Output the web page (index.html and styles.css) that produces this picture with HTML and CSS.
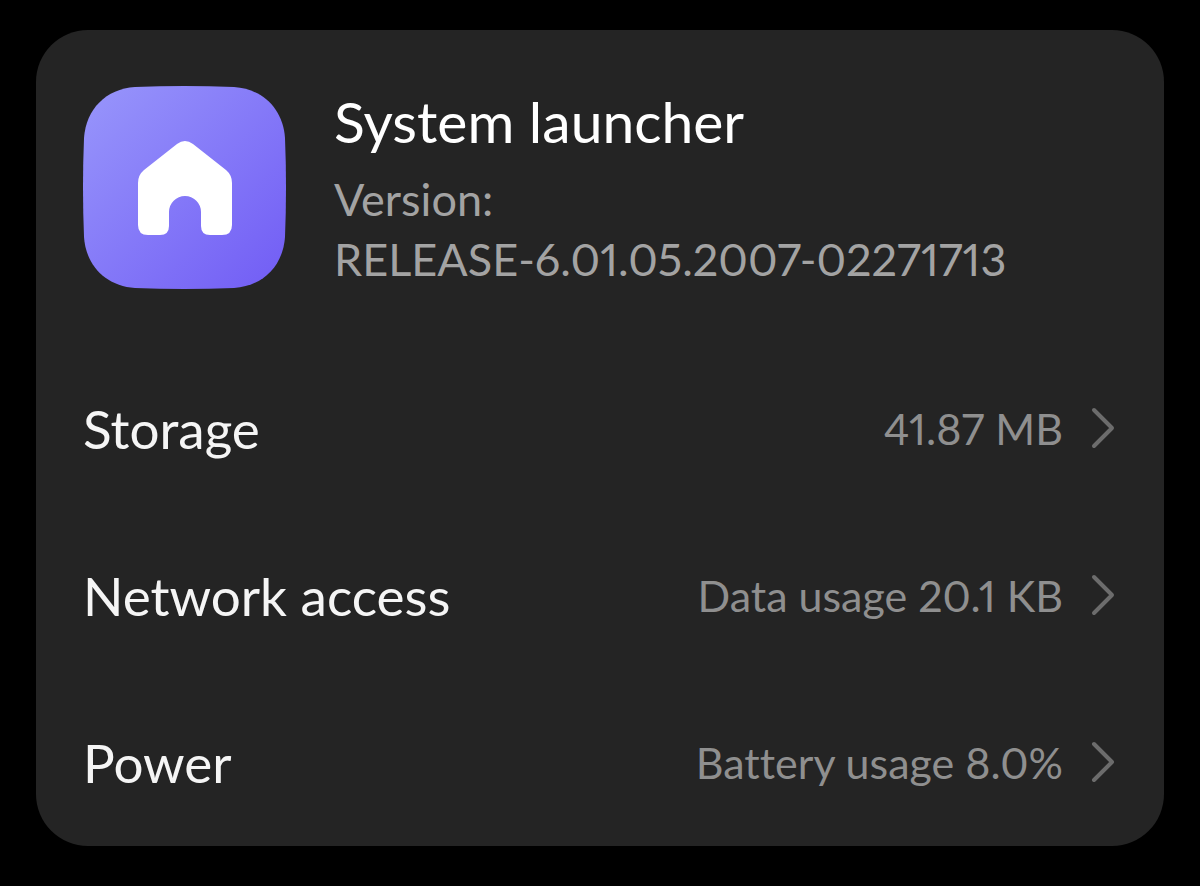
FILE: index.html
```html
<!DOCTYPE html>
<html lang="en">
<head>
<meta charset="utf-8">
<meta name="viewport" content="width=device-width, initial-scale=1">
<title>App info</title>
<link rel="stylesheet" href="styles.css">
</head>
<body>
<main class="card">
  <header class="app">
    <svg class="app-icon" viewBox="0 0 203 203" aria-hidden="true">
      <defs>
        <linearGradient id="tile" x1="0" y1="0" x2="1" y2="1">
          <stop offset="0.05" stop-color="#9693fb"/>
          <stop offset="0.95" stop-color="#735ff5"/>
        </linearGradient>
      </defs>
      <path fill="url(#tile)" d="M52 1Q101 -1 151 1C180 3 200 23 202 52Q204 101 202 151C200 180 180 200 151 202Q101 204 52 202C23 200 3 180 1 151Q-1 101 1 52C3 23 23 3 52 1Z"/>
      <path fill="#fff" d="M94 58Q102 52 110 58L143 84Q149 89 149 97V139Q149 149 139 149H127Q118 149 118 140V126A16 16 0 0 0 86 126V140Q86 149 77 149H65Q55 149 55 139V97Q55 89 61 84Z"/>
    </svg>
    <div class="app-text">
      <h1 class="app-name">System launcher</h1>
      <p class="app-version">Version:<br>RELEASE-6.01.05.2007-02271713</p>
    </div>
  </header>
  <nav class="rows">
    <a class="row" href="#storage"><span class="label">Storage</span><span class="value">41.87 MB</span><svg class="chevron" viewBox="0 0 24 42" aria-hidden="true"><path d="M3 3L21 21L3 39"/></svg></a>
    <a class="row" href="#network"><span class="label">Network access</span><span class="value">Data usage 20.1 KB</span><svg class="chevron" viewBox="0 0 24 42" aria-hidden="true"><path d="M3 3L21 21L3 39"/></svg></a>
    <a class="row" href="#power"><span class="label">Power</span><span class="value">Battery usage 8.0%</span><svg class="chevron" viewBox="0 0 24 42" aria-hidden="true"><path d="M3 3L21 21L3 39"/></svg></a>
  </nav>
</main>
</body>
</html>
```
FILE: styles.css
```css
* { box-sizing: border-box; }
body { margin: 0; padding: 30px 36px 40px; background: #000; color: #fff; font-family: Lato, "Open Sans", sans-serif; font-variant-ligatures: none; font-variant-numeric: proportional-nums; }
.card { padding: 56px 49px 0 47px; border-radius: 52px; background: #242424; }
.app { display: flex; gap: 48px; }
.app-icon { flex: none; width: 203px; height: 203px; }
.app-text { min-width: 0; }
.app-name { margin: 0 0 13px; font-size: 57px; line-height: 70px; font-weight: 400; }
.app-version { margin: 0; font-size: 45px; line-height: 60px; color: #a3a3a3; }
.rows { padding-top: 56px; }
.row { display: flex; align-items: center; min-height: 167px; padding-bottom: 1px; color: inherit; text-decoration: none; }
.label { flex: 1; font-size: 53px; color: #f5f5f5; }
.value { font-size: 43px; color: #8f8f8f; }
.chevron { flex: none; width: 24px; height: 42px; margin-left: 28px; fill: none; stroke: #6c6c6c; stroke-width: 4; stroke-linecap: round; stroke-linejoin: round; }
```
